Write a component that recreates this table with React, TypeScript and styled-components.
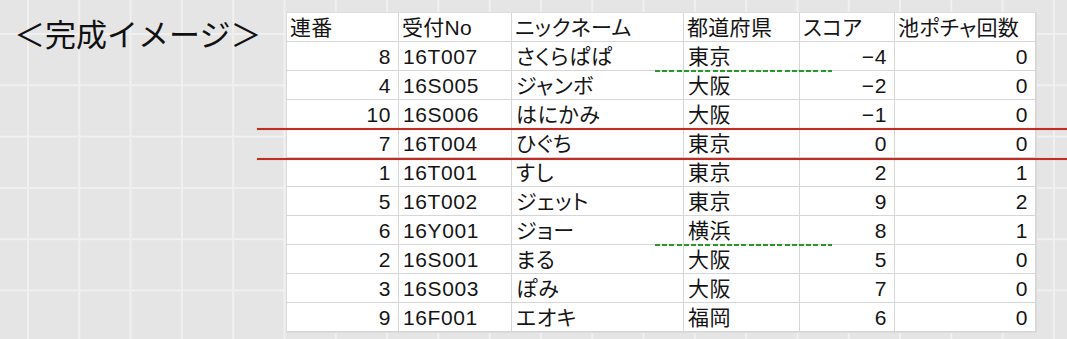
import React, { FC } from 'react';
import styled, { createGlobalStyle } from 'styled-components';

type Entry = {
	no: number;
	code: string;
	nick: string;
	pref: string;
	score: number;
	misses: number;
};

const entries: Entry[] = [
	{ no: 8, code: '16T007', nick: 'さくらぱぱ', pref: '東京', score: -4, misses: 0 },
	{ no: 4, code: '16S005', nick: 'ジャンボ', pref: '大阪', score: -2, misses: 0 },
	{ no: 10, code: '16S006', nick: 'はにかみ', pref: '大阪', score: -1, misses: 0 },
	{ no: 7, code: '16T004', nick: 'ひぐち', pref: '東京', score: 0, misses: 0 },
	{ no: 1, code: '16T001', nick: 'すし', pref: '東京', score: 2, misses: 1 },
	{ no: 5, code: '16T002', nick: 'ジェット', pref: '東京', score: 9, misses: 2 },
	{ no: 6, code: '16Y001', nick: 'ジョー', pref: '横浜', score: 8, misses: 1 },
	{ no: 2, code: '16S001', nick: 'まる', pref: '大阪', score: 5, misses: 0 },
	{ no: 3, code: '16S003', nick: 'ぽみ', pref: '大阪', score: 7, misses: 0 },
	{ no: 9, code: '16F001', nick: 'エオキ', pref: '福岡', score: 6, misses: 0 },
];

const headers = ['連番', '受付No', 'ニックネーム', '都道府県', 'スコア', '池ポチャ回数'];

// excel shows the minus as a long dash
const num = (n: number) => (n < 0 ? `−${Math.abs(n)}` : String(n));

const App: FC = () => {
	return (
		<>
			<GlobalStyle />
			<Page>
				<TitleArea>
					<Title>＜完成イメージ＞</Title>
				</TitleArea>

				<TableWrap>
					<Sheet>
						{headers.map((h) => (
							<HeadCell key={h}>{h}</HeadCell>
						))}
						{entries.map((e) => (
							<React.Fragment key={e.no}>
								<Cell align='right'>{e.no}</Cell>
								<Cell>{e.code}</Cell>
								<Cell>{e.nick}</Cell>
								<Cell>{e.pref}</Cell>
								<Cell align='right'>{num(e.score)}</Cell>
								<Cell align='right'>{e.misses}</Cell>
							</React.Fragment>
						))}
					</Sheet>

					<RedLine top={115} />
					<RedLine top={145} />
					<GreenDash top={57} />
					<GreenDash top={231} />
				</TableWrap>
			</Page>
		</>
	);
};

const GlobalStyle = createGlobalStyle`
	html, body {
		margin: 0;
		padding: 0;
		overflow: hidden;
	}
	body {
		font-family: 'Noto Sans CJK JP', 'Noto Sans', sans-serif;
		color: #141414;
	}
`;

const Page = styled.div`
	width: 1067px;
	height: 339px;
	display: flex;
	align-items: flex-start;
	padding-top: 13px;
	box-sizing: border-box;
	background-color: #e5e5e5;
	background-image: linear-gradient(to right, #f0f0f0 2px, transparent 2px),
		linear-gradient(to bottom, #f0f0f0 2px, transparent 2px);
	background-size: 51.3px 51.3px;
	background-position: 27px 33px;
`;

const TitleArea = styled.div`
	width: 287px;
	flex: 0 0 287px;
	padding-left: 14px;
	box-sizing: border-box;
`;

const Title = styled.h1`
	margin: 0;
	font-size: 31px;
	font-weight: 400;
	line-height: 40px;
	color: #111;
	white-space: nowrap;
`;

const TableWrap = styled.div`
	position: relative;
`;

const Sheet = styled.div`
	display: grid;
	grid-template-columns: 112px 113px 172px 116px 95px 141px;
	grid-auto-rows: 29px;
	background: #fff;
	box-shadow: 0 0 0 1px #dcdcdc;
`;

const Cell = styled.div<{ align?: 'left' | 'right' }>`
	box-sizing: border-box;
	border-right: 1px solid #d6d6d6;
	border-bottom: 1px solid #d6d6d6;
	padding: 0 ${({ align }) => (align === 'right' ? '7px' : '0')} 0 ${({ align }) => (align === 'right' ? '0' : '4px')};
	display: flex;
	align-items: center;
	justify-content: ${({ align }) => (align === 'right' ? 'flex-end' : 'flex-start')};
	font-family: 'Liberation Sans', 'Noto Sans CJK JP', sans-serif;
	font-size: 21px;
	line-height: 1;
	letter-spacing: 0.6px;
	font-feature-settings: 'palt';
	white-space: nowrap;
	overflow: hidden;
	color: #151515;
`;

const HeadCell = styled(Cell)`
	padding-left: 3px;
	letter-spacing: 0.3px;
	overflow: visible;
`;

const RedLine = styled.div<{ top: number }>`
	position: absolute;
	top: ${({ top }) => `${top}px`};
	left: -30px;
	width: 810px;
	height: 2px;
	background: #bf2d24;
	box-shadow: 0 0 1px rgba(190, 45, 36, 0.5);
`;

const GreenDash = styled.div<{ top: number }>`
	position: absolute;
	top: ${({ top }) => `${top}px`};
	left: 368px;
	width: 177px;
	height: 2px;
	background: repeating-linear-gradient(to right, #259a25 0, #259a25 5px, transparent 5px, transparent 7.2px);
`;

export default App;
